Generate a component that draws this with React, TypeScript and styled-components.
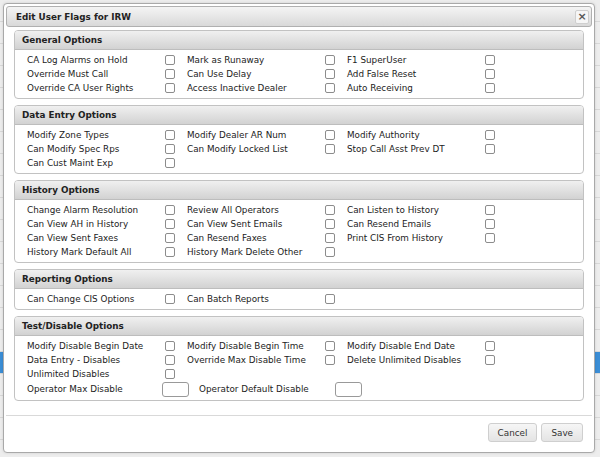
import React from 'react';
import styled, { createGlobalStyle } from 'styled-components';

const GlobalStyle = createGlobalStyle`
  html, body {
    margin: 0;
    padding: 0;
    background: #ebebeb;
    font-family: "DejaVu Sans", Verdana, sans-serif;
    font-size: 8.8px;
    color: #222;
  }
`;

type Flag = { label: string };
type Section = { title: string; rows: string[][]; inputs?: boolean };

const sections: Section[] = [
  {
    title: 'General Options',
    rows: [
      ['CA Log Alarms on Hold', 'Mark as Runaway', 'F1 SuperUser'],
      ['Override Must Call', 'Can Use Delay', 'Add False Reset'],
      ['Override CA User Rights', 'Access Inactive Dealer', 'Auto Receiving'],
    ],
  },
  {
    title: 'Data Entry Options',
    rows: [
      ['Modify Zone Types', 'Modify Dealer AR Num', 'Modify Authority'],
      ['Can Modify Spec Rps', 'Can Modify Locked List', 'Stop Call Asst Prev DT'],
      ['Can Cust Maint Exp'],
    ],
  },
  {
    title: 'History Options',
    rows: [
      ['Change Alarm Resolution', 'Review All Operators', 'Can Listen to History'],
      ['Can View AH in History', 'Can View Sent Emails', 'Can Resend Emails'],
      ['Can View Sent Faxes', 'Can Resend Faxes', 'Print CIS From History'],
      ['History Mark Default All', 'History Mark Delete Other'],
    ],
  },
  {
    title: 'Reporting Options',
    rows: [['Can Change CIS Options', 'Can Batch Reports']],
  },
  {
    title: 'Test/Disable Options',
    rows: [
      ['Modify Disable Begin Date', 'Modify Disable Begin Time', 'Modify Disable End Date'],
      ['Data Entry - Disables', 'Override Max Disable Time', 'Delete Unlimited Disables'],
      ['Unlimited Disables'],
    ],
    inputs: true,
  },
];

const Page = styled.div`
  position: relative;
  width: 600px;
  height: 457px;
  overflow: hidden;
`;

const Backdrop = styled.div`
  display: flex;
  flex-direction: column;
`;

const BackRow = styled.div<{ $selected?: boolean }>`
  height: 21px;
  border-bottom: 1px solid #d8d8d8;
  background: ${(p) => (p.$selected ? '#3b8ed6' : '#ededed')};
`;

const Dialog = styled.div`
  position: absolute;
  left: 3px;
  top: 3px;
  width: 586px;
  height: 444px;
  padding: 2px;
  background: #fff;
  border: 1px solid #a9a9a9;
  border-radius: 4px;
  display: flex;
  flex-direction: column;
  box-shadow: 0 0 3px rgba(0, 0, 0, 0.12);
`;

const TitleBar = styled.div`
  height: 19px;
  border: 1px solid #b0b0b0;
  border-radius: 3px;
  background: linear-gradient(#f4f4f4, #d9d9d9);
  display: flex;
  align-items: center;
  justify-content: space-between;
  padding: 0 2px 0 9px;
  font-weight: bold;
`;

const CloseButton = styled.div`
  width: 12px;
  height: 12px;
  border: 1px solid #cfcfcf;
  border-radius: 2px;
  background: #f6f6f6;
  display: flex;
  align-items: center;
  justify-content: center;
  color: #555;
  font-size: 11px;
  font-weight: bold;
  line-height: 1;
`;

const Content = styled.div`
  flex: 1;
  padding: 3px 8px 0 8px;
  display: flex;
  flex-direction: column;
  gap: 6px;
`;

const Box = styled.div`
  border: 1px solid #c2c2c2;
  border-radius: 4px;
  overflow: hidden;
`;

const BoxHeader = styled.div`
  height: 18px;
  line-height: 18px;
  padding-left: 7px;
  font-weight: bold;
  background: linear-gradient(#f0f0f0, #d2d2d2);
  border-bottom: 1px solid #bdbdbd;
`;

const BoxBody = styled.div`
  padding: 3px 0 3px 12px;
`;

const Row = styled.div`
  display: flex;
  height: 14px;
  align-items: center;
`;

const InputRow = styled(Row)`
  height: 16px;
`;

const Cell = styled.div`
  display: flex;
  align-items: center;
  width: 160px;
`;

const Label = styled.span<{ $w?: number }>`
  width: ${(p) => p.$w ?? 138}px;
  white-space: nowrap;
`;

const Check = styled.span`
  width: 8px;
  height: 8px;
  border: 1px solid #8c8c8c;
  border-radius: 2px;
  background: #fff;
`;

const NumInput = styled.span`
  width: 25px;
  height: 13px;
  border: 1px solid #999;
  border-radius: 3px;
  background: #fff;
  margin-right: 10px;
`;

const Footer = styled.div`
  height: 35px;
  border-top: 1px solid #d9d9d9;
  display: flex;
  justify-content: flex-end;
  align-items: flex-start;
  gap: 4px;
  padding: 7px 9px 0 0;
  box-sizing: border-box;
`;

const Button = styled.button`
  height: 19px;
  padding: 0 9px;
  font-family: inherit;
  font-size: 8.8px;
  color: #333;
  background: linear-gradient(#f6f6f6, #e4e4e4);
  border: 1px solid #cfcfcf;
  border-radius: 3px;
`;

function FlagCell({ label }: Flag) {
  return (
    <Cell>
      <Label>{label}</Label>
      <Check />
    </Cell>
  );
}

export default function App() {
  return (
    <Page>
      <GlobalStyle />
      <Backdrop>
        {Array.from({ length: 22 }).map((_, i) => (
          <BackRow key={i} $selected={i === 16} />
        ))}
      </Backdrop>
      <Dialog>
        <TitleBar>
          <span>Edit User Flags for IRW</span>
          <CloseButton>×</CloseButton>
        </TitleBar>
        <Content>
          {sections.map((s) => (
            <Box key={s.title}>
              <BoxHeader>{s.title}</BoxHeader>
              <BoxBody>
                {s.rows.map((r, i) => (
                  <Row key={i}>
                    {r.map((l) => (
                      <FlagCell key={l} label={l} />
                    ))}
                  </Row>
                ))}
                {s.inputs && (
                  <InputRow>
                    <Label $w={135}>Operator Max Disable</Label>
                    <NumInput />
                    <Label $w={136}>Operator Default Disable</Label>
                    <NumInput />
                  </InputRow>
                )}
              </BoxBody>
            </Box>
          ))}
        </Content>
        <Footer>
          <Button>Cancel</Button>
          <Button>Save</Button>
        </Footer>
      </Dialog>
    </Page>
  );
}
